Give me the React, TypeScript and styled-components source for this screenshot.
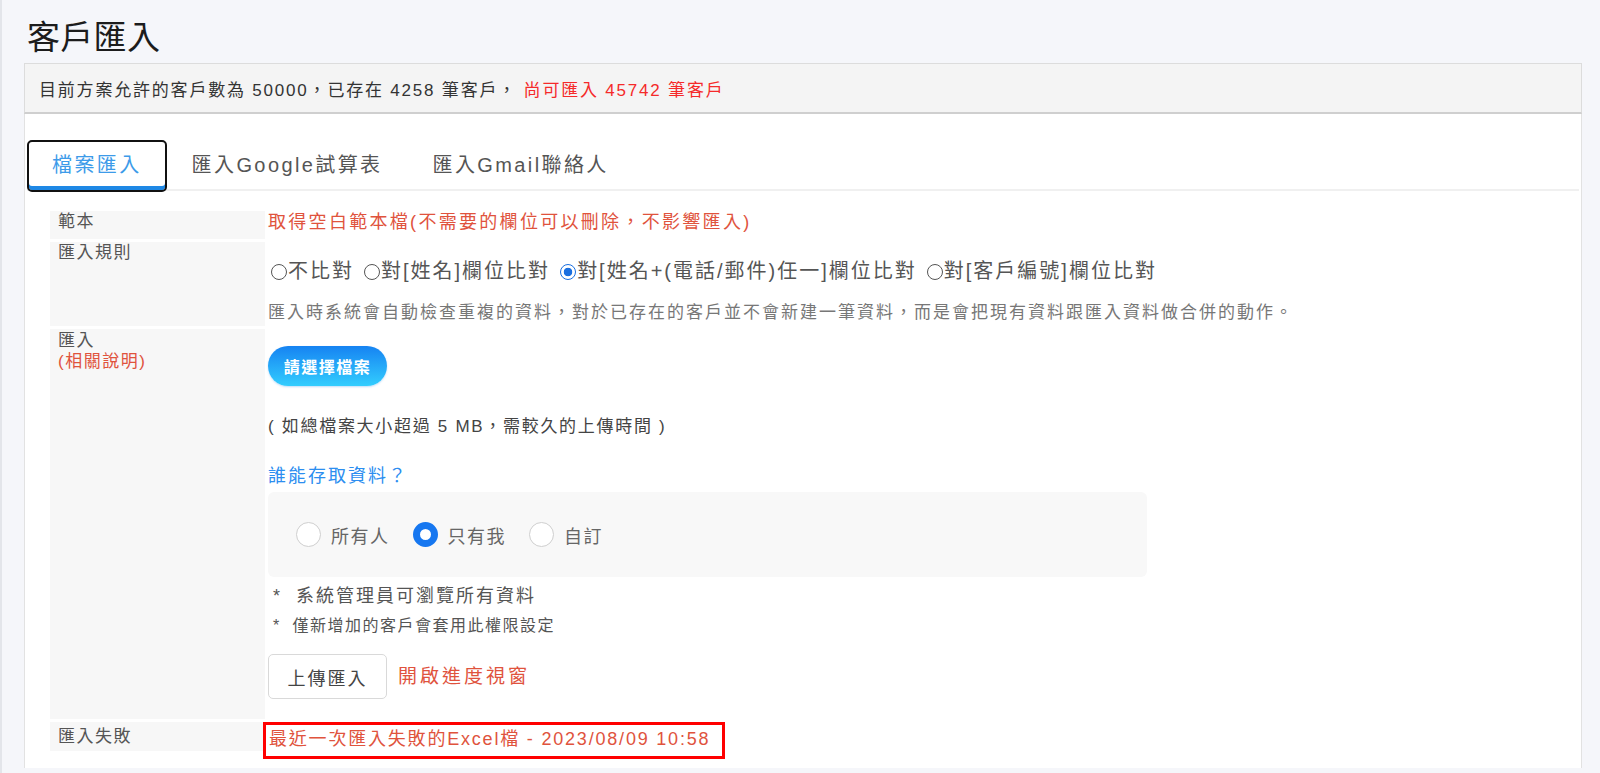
import React from "react";
import styled, { createGlobalStyle, css } from "styled-components";

const GlobalStyle = createGlobalStyle`
  html, body {
    margin: 0;
    padding: 0;
    background: #f5f6fa;
  }
  body {
    font-family: "Liberation Sans", "Noto Sans CJK TC", sans-serif;
  }
  * { box-sizing: border-box; }
`;

const Page = styled.div`
  min-height: 773px;
  border-left: 2px solid #e3e5ea;
  padding: 0 18px 0 22px;
`;

const Title = styled.h1`
  margin: 0;
  padding: 18px 0 0 3px;
  font-size: 33px;
  line-height: 40px;
  font-weight: 400;
  letter-spacing: 0.3px;
  color: #1c1c1c;
`;

const InfoBar = styled.div`
  margin-top: 5px;
  height: 51px;
  display: flex;
  align-items: center;
  padding: 0 14px;
  background: #f4f4f4;
  border: 1px solid #dcdcdc;
  border-bottom: 2px solid #cfcfcf;
  font-size: 17px;
  letter-spacing: 1.8px;
  color: #333;
  white-space: pre;
`;

const Highlight = styled.span`
  color: #f52a2a;
`;

const Card = styled.div`
  height: 654px;
  background: #fff;
  border: 1px solid #e2e2e2;
  border-top: none;
  border-bottom: none;
  padding: 26px 2px 8px 2px;
`;

const TabBar = styled.div`
  display: flex;
  border-bottom: 2px solid #f0f0f0;
`;

const Tab = styled.div<{ $active?: boolean }>`
  position: relative;
  height: 52px;
  margin-bottom: -3px;
  padding: 0 23px 5px;
  display: flex;
  align-items: center;
  border: 2px solid transparent;
  font-size: 20px;
  letter-spacing: 2.4px;
  color: #555;
  ${(p) =>
    p.$active &&
    css`
      border-color: #111;
      border-radius: 5px;
      color: #3d9be9;
      box-shadow: inset 0 -4px 0 #1e88e5;
    `}
`;

const Form = styled.div`
  margin: 20px 0 0 23px;
  display: flex;
  flex-direction: column;
  gap: 3px;
`;

const Row = styled.div<{ $min?: number; $top?: boolean }>`
  display: grid;
  grid-template-columns: 215px 1fr;
  column-gap: 2px;
  align-items: ${(p) => (p.$top ? "start" : "stretch")};
  min-height: ${(p) => (p.$min ? `${p.$min}px` : "auto")};
`;

const Label = styled.div<{ $fixed?: number }>`
  background: #f7f7f7;
  padding: 0 8px;
  font-size: 17px;
  letter-spacing: 1.5px;
  line-height: 21px;
  color: #555;
  ${(p) =>
    p.$fixed &&
    css`
      height: ${p.$fixed}px;
      display: flex;
      align-items: center;
    `}
`;

const LabelMain = styled.div`
  padding-top: 1px;
`;

const LabelHint = styled.div`
  color: #e0533d;
  line-height: 22px;
`;

const Value = styled.div<{ $pad?: string }>`
  display: flex;
  flex-direction: column;
  align-items: flex-start;
  padding: ${(p) => p.$pad || "0 0 0 1px"};
`;

const OrangeLink = styled.span<{ $size?: number; $ls?: number }>`
  color: #e0533d;
  font-size: ${(p) => p.$size || 18}px;
  letter-spacing: ${(p) => p.$ls ?? 2.3}px;
  line-height: 22px;
  cursor: pointer;
`;

const RadioLine = styled.div`
  display: flex;
  align-items: center;
  font-size: 20px;
  letter-spacing: 2px;
  line-height: 26px;
  color: #555;
`;

const RuleOption = styled.label`
  display: inline-flex;
  align-items: center;
  margin-right: 7px;
`;

const SmallRadio = styled.span<{ $checked?: boolean }>`
  width: 16px;
  height: 16px;
  margin: 2px 1px 0 3px;
  border-radius: 50%;
  border: 1.2px solid #555;
  background: #fff;
  flex: none;
  ${(p) =>
    p.$checked &&
    css`
      border: 1.6px solid #1a6fe0;
      background: radial-gradient(circle, #1a6fe0 0 4px, #fff 4.6px);
    `}
`;

const Desc = styled.div`
  margin-top: 17px;
  font-size: 17px;
  letter-spacing: 2px;
  line-height: 24px;
  color: #777;
`;

const PrimaryButton = styled.button`
  width: 119px;
  height: 40px;
  border: none;
  border-radius: 20px;
  background: linear-gradient(180deg, #1683f2 0%, #33cdfe 100%);
  color: #fff;
  font-family: inherit;
  font-weight: 700;
  font-size: 16px;
  letter-spacing: 1.5px;
  box-shadow: 0 1px 2px rgba(0, 120, 230, 0.25);
  cursor: pointer;
`;

const Note = styled.div<{ $mt: number; $size: number; $ls: number; $color?: string; $indent?: number }>`
  margin-top: ${(p) => p.$mt}px;
  margin-left: ${(p) => p.$indent || 0}px;
  font-size: ${(p) => p.$size}px;
  letter-spacing: ${(p) => p.$ls}px;
  line-height: 24px;
  color: ${(p) => p.$color || "#444"};
  white-space: pre;
`;

const AccessBox = styled.div`
  margin-top: 4px;
  width: 879px;
  height: 85px;
  padding-left: 28px;
  display: flex;
  align-items: center;
  background: #f8f8f8;
  border-radius: 6px;
`;

const AccessOption = styled.label`
  display: flex;
  align-items: center;
  margin-right: 23px;
  font-size: 18px;
  letter-spacing: 1.5px;
  color: #666;
`;

const BigRadio = styled.span<{ $checked?: boolean }>`
  width: 25px;
  height: 25px;
  margin-right: 10px;
  border-radius: 50%;
  border: 1.5px solid #cfcfcf;
  background: #fff;
  flex: none;
  ${(p) =>
    p.$checked &&
    css`
      border: 7px solid #1677f0;
    `}
`;

const ActionRow = styled.div`
  margin-top: 16px;
  display: flex;
  align-items: center;
  gap: 11px;
`;

const PlainButton = styled.button`
  width: 119px;
  height: 45px;
  border: 1px solid #d9d9d9;
  border-radius: 5px;
  background: #fff;
  font-family: inherit;
  font-size: 18px;
  letter-spacing: 2px;
  color: #444;
  cursor: pointer;
`;

const FailBox = styled.span`
  display: inline-block;
  margin-left: -5px;
  padding: 2px 12px 5px 3px;
  border: 3px solid #ff0000;
  color: #e0533d;
  font-size: 18px;
  letter-spacing: 1.8px;
  line-height: 24px;
`;

const rules = [
  { text: "不比對", checked: false },
  { text: "對[姓名]欄位比對", checked: false },
  { text: "對[姓名+(電話/郵件)任一]欄位比對", checked: true },
  { text: "對[客戶編號]欄位比對", checked: false },
];

const access = [
  { text: "所有人", checked: false },
  { text: "只有我", checked: true },
  { text: "自訂", checked: false },
];

export default function App() {
  return (
    <>
      <GlobalStyle />
      <Page>
        <Title>客戶匯入</Title>
        <InfoBar>
          目前方案允許的客戶數為 50000，已存在 4258 筆客戶， <Highlight>尚可匯入 45742 筆客戶</Highlight>
        </InfoBar>
        <Card>
          <TabBar>
            <Tab $active>檔案匯入</Tab>
            <Tab>匯入Google試算表</Tab>
            <Tab>匯入Gmail聯絡人</Tab>
          </TabBar>
          <Form>
            <Row $min={28}>
              <Label>範本</Label>
              <Value>
                <OrangeLink>取得空白範本檔(不需要的欄位可以刪除，不影響匯入)</OrangeLink>
              </Value>
            </Row>
            <Row>
              <Label>匯入規則</Label>
              <Value $pad="16px 0 1px 1px">
                <RadioLine>
                  {rules.map((r) => (
                    <RuleOption key={r.text}>
                      <SmallRadio $checked={r.checked} />
                      {r.text}
                    </RuleOption>
                  ))}
                </RadioLine>
                <Desc>
                  匯入時系統會自動檢查重複的資料，對於已存在的客戶並不會新建一筆資料，而是會把現有資料跟匯入資料做合併的動作。
                </Desc>
              </Value>
            </Row>
            <Row>
              <Label>
                <LabelMain>匯入</LabelMain>
                <LabelHint>(相關說明)</LabelHint>
              </Label>
              <Value $pad="17px 0 20px 1px">
                <PrimaryButton>請選擇檔案</PrimaryButton>
                <Note $mt={29} $size={17} $ls={1.7}>( 如總檔案大小超過 5 MB，需較久的上傳時間 )</Note>
                <Note $mt={25} $size={18} $ls={2} $color="#2c8ef0">誰能存取資料？</Note>
                <AccessBox>
                  {access.map((a) => (
                    <AccessOption key={a.text}>
                      <BigRadio $checked={a.checked} />
                      {a.text}
                    </AccessOption>
                  ))}
                </AccessBox>
                <Note $mt={7} $size={18} $ls={2} $color="#555" $indent={5}>*  系統管理員可瀏覽所有資料</Note>
                <Note $mt={6} $size={16} $ls={1.5} $color="#555" $indent={5}>*  僅新增加的客戶會套用此權限設定</Note>
                <ActionRow>
                  <PlainButton>上傳匯入</PlainButton>
                  <OrangeLink $size={19} $ls={3}>開啟進度視窗</OrangeLink>
                </ActionRow>
              </Value>
            </Row>
            <Row $top>
              <Label $fixed={29}>匯入失敗</Label>
              <Value>
                <FailBox>最近一次匯入失敗的Excel檔 - 2023/08/09 10:58</FailBox>
              </Value>
            </Row>
          </Form>
        </Card>
      </Page>
    </>
  );
}
